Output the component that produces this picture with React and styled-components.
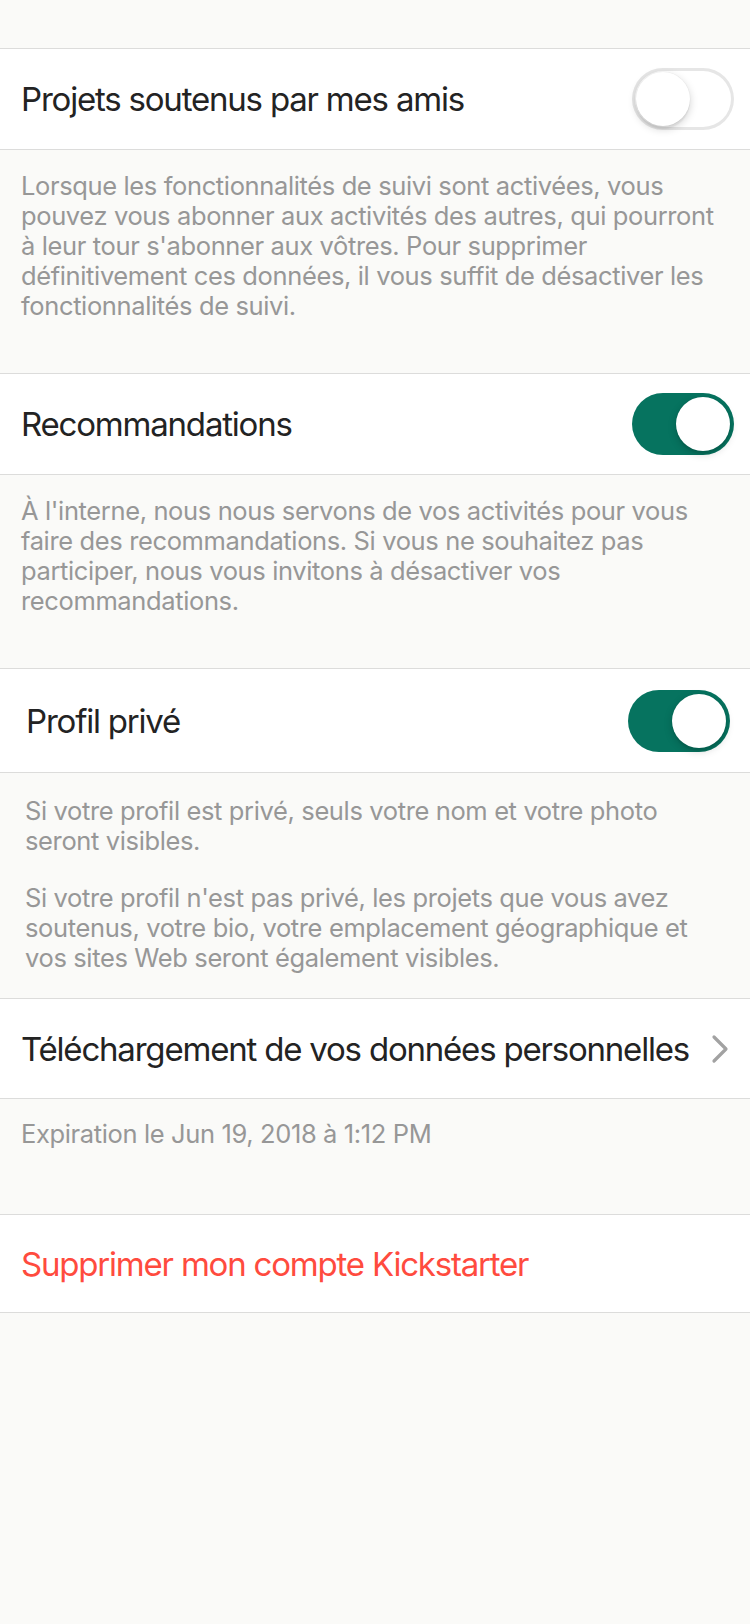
import React from "react";
import styled, { createGlobalStyle } from "styled-components";

const GlobalStyle = createGlobalStyle`
  html, body {
    margin: 0;
    padding: 0;
    background: #fafaf8;
  }
  body {
    font-family: Inter, "Noto Sans", "Liberation Sans", sans-serif;
    -webkit-font-smoothing: antialiased;
  }
`;

const Page = styled.div`
  min-height: 1624px;
  padding-top: 48px;
  box-sizing: border-box;
  background: #fafaf8;
`;

const Row = styled.div`
  display: flex;
  align-items: center;
  justify-content: space-between;
  gap: 12px;
  background: #ffffff;
  border-top: 1px solid #dcdcdb;
  border-bottom: 1px solid #dcdcdb;
  height: ${(p) => p.$h}px;
  padding: 0 ${(p) => p.$right ?? 16}px 0 ${(p) => p.$left ?? 21}px;
`;

const Title = styled.span`
  min-width: 0;
  font-size: 33px;
  line-height: 34px;
  color: ${(p) => (p.$danger ? "#ff4b3e" : "#232323")};
  letter-spacing: -1.2px;
  white-space: nowrap;
`;

const Footer = styled.div`
  box-sizing: border-box;
  height: ${(p) => p.$h}px;
  padding: ${(p) => p.$top}px ${(p) => p.$right ?? 16}px 0 ${(p) => p.$left ?? 21}px;
  font-size: 25.5px;
  line-height: 30px;
  color: #979797;
  letter-spacing: -0.37px;
`;

const Paragraph = styled.p`
  margin: 0;
  white-space: nowrap;
  & + & {
    margin-top: 27px;
  }
`;

const Track = styled.div`
  position: relative;
  box-sizing: border-box;
  width: 102px;
  height: 62px;
  border-radius: 31px;
  flex-shrink: 0;
  background: ${(p) => (p.$on ? "#06735f" : "#ffffff")};
  box-shadow: ${(p) => (p.$on ? "none" : "inset 0 0 0 3px #e6e6e6")};
`;

const Knob = styled.div`
  position: absolute;
  top: 4px;
  left: ${(p) => (p.$on ? 44 : 4)}px;
  width: 54px;
  height: 54px;
  border-radius: 50%;
  background: #ffffff;
  box-shadow: 0 3px 8px rgba(0, 0, 0, 0.18), 0 3px 1px rgba(0, 0, 0, 0.05),
    0 0 0 0.5px rgba(0, 0, 0, 0.04);
`;

const Switch = ({ on }) => (
  <Track $on={on}>
    <Knob $on={on} />
  </Track>
);

const ChevronIcon = styled.svg`
  flex-shrink: 0;
  display: block;
`;

const Chevron = () => (
  <ChevronIcon width="18" height="30" viewBox="0 0 18 30" fill="none">
    <polyline
      points="3,3 15,15 3,27"
      stroke="#a2a2a2"
      strokeWidth="3.2"
      strokeLinecap="round"
      strokeLinejoin="round"
    />
  </ChevronIcon>
);

export default function App() {
  return (
    <>
      <GlobalStyle />
      <Page>
        <Row $h={100}>
          <Title>Projets soutenus par mes amis</Title>
          <Switch on={false} />
        </Row>
        <Footer $h={223} $top={21}>
          <Paragraph>
            Lorsque les fonctionnalités de suivi sont activées, vous
            <br />
            pouvez vous abonner aux activités des autres, qui pourront
            <br />
            à leur tour s'abonner aux vôtres. Pour supprimer
            <br />
            définitivement ces données, il vous suffit de désactiver les
            <br />
            fonctionnalités de suivi.
          </Paragraph>
        </Footer>

        <Row $h={100}>
          <Title>Recommandations</Title>
          <Switch on />
        </Row>
        <Footer $h={193} $top={21}>
          <Paragraph>
            À l'interne, nous nous servons de vos activités pour vous
            <br />
            faire des recommandations. Si vous ne souhaitez pas
            <br />
            participer, nous vous invitons à désactiver vos
            <br />
            recommandations.
          </Paragraph>
        </Footer>

        <Row $h={103} $left={26} $right={20}>
          <Title>Profil privé</Title>
          <Switch on />
        </Row>
        <Footer $h={225} $top={23} $left={25}>
          <Paragraph>
            Si votre profil est privé, seuls votre nom et votre photo
            <br />
            seront visibles.
          </Paragraph>
          <Paragraph>
            Si votre profil n'est pas privé, les projets que vous avez
            <br />
            soutenus, votre bio, votre emplacement géographique et
            <br />
            vos sites Web seront également visibles.
          </Paragraph>
        </Footer>

        <Row $h={99} $right={21}>
          <Title>Téléchargement de vos données personnelles</Title>
          <Chevron />
        </Row>
        <Footer $h={115} $top={20}>
          <Paragraph>Expiration le Jun 19, 2018 à 1:12 PM</Paragraph>
        </Footer>

        <Row $h={97}>
          <Title $danger>Supprimer mon compte Kickstarter</Title>
        </Row>
      </Page>
    </>
  );
}
